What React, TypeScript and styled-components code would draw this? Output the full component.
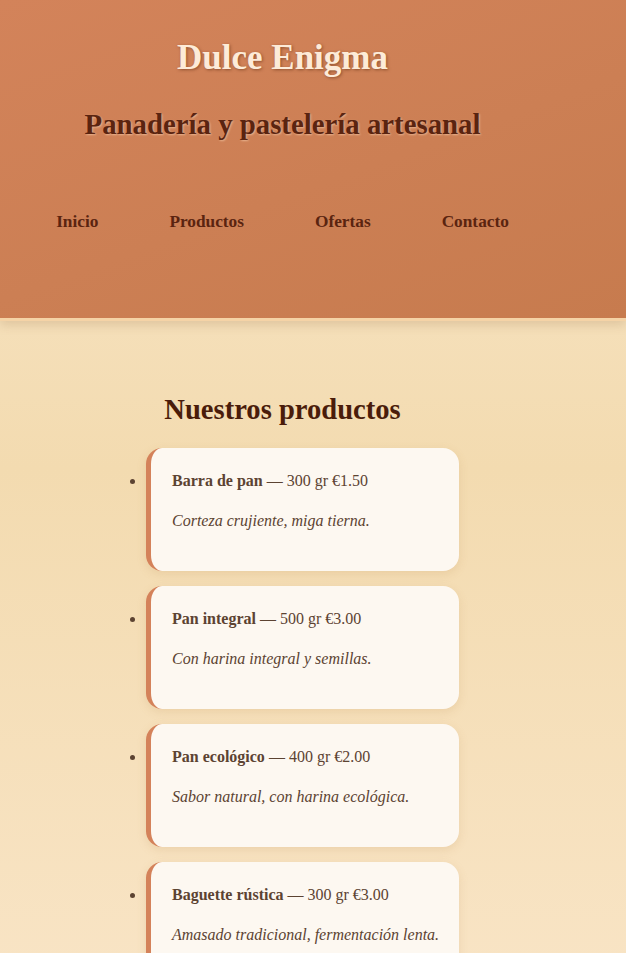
import React from 'react'
import styled, { createGlobalStyle } from 'styled-components'

const GlobalStyle = createGlobalStyle`
  html, body {
    margin: 0;
    padding: 0;
  }
  body {
    font-family: "Liberation Serif", "Times New Roman", serif;
    background: linear-gradient(180deg, #f9e8cc 0%, #f3dbb0 45%, #f9e5c7 100%);
    min-height: 100vh;
    color: #5c4332;
  }
`

const products = [
    { name: 'Barra de pan', weight: '300 gr', price: '€1.50', desc: 'Corteza crujiente, miga tierna.' },
    { name: 'Pan integral', weight: '500 gr', price: '€3.00', desc: 'Con harina integral y semillas.' },
    { name: 'Pan ecológico', weight: '400 gr', price: '€2.00', desc: 'Sabor natural, con harina ecológica.' },
    { name: 'Baguette rústica', weight: '300 gr', price: '€3.00', desc: 'Amasado tradicional, fermentación lenta.' }
]

function App(): JSX.Element {
    return (
        <>
            <GlobalStyle />
            <Header>
                <HeaderInner>
                    <Title>Dulce Enigma</Title>
                    <Subtitle>Panadería y pastelería artesanal</Subtitle>
                    <Nav>
                        <NavLink href="#">Inicio</NavLink>
                        <NavLink href="#">Productos</NavLink>
                        <NavLink href="#">Ofertas</NavLink>
                        <NavLink href="#">Contacto</NavLink>
                    </Nav>
                </HeaderInner>
            </Header>
            <Main>
                <Section>
                    <SectionTitle>Nuestros productos</SectionTitle>
                    <ProductList>
                        {products.map((p) => (
                            <ProductItem key={p.name}>
                                <strong>{p.name}</strong> — {p.weight} {p.price}
                                <Description>{p.desc}</Description>
                            </ProductItem>
                        ))}
                    </ProductList>
                </Section>
            </Main>
        </>
    )
}

export const Header = styled.header`
  height: 318px;
  background: linear-gradient(160deg, #d3835a 0%, #cc7f54 55%, #c77b4e 100%);
  border-bottom: 3px solid #f5d3a6;
  box-shadow: 0 4px 10px rgba(120, 80, 40, 0.18);
  position: relative;
`

export const HeaderInner = styled.div`
  width: 565px;
  padding-top: 37px;
  display: flex;
  flex-direction: column;
  align-items: center;
  text-align: center;
`

export const Title = styled.h1`
  margin: 0;
  font-size: 35px;
  line-height: 1.2;
  font-weight: 700;
  color: #fdebd8;
  text-shadow: 1px 1px 3px rgba(90, 40, 15, 0.55);
`

export const Subtitle = styled.h2`
  margin: 28px 0 0;
  font-size: 28.8px;
  line-height: 1.2;
  font-weight: 700;
  color: #5a2410;
  text-shadow: 1px 1px 2px rgba(255, 220, 190, 0.55);
`

export const Nav = styled.nav`
  margin-top: 70px;
  display: flex;
  justify-content: center;
  gap: 71px;
`

export const NavLink = styled.a`
  font-size: 17.3px;
  line-height: 1.2;
  font-weight: 700;
  color: #5a2410;
  text-decoration: none;
`

export const Main = styled.main`
  width: 565px;
  padding: 68px 0 40px;
`

export const Section = styled.section`
  width: 353px;
  margin: 0 auto;
`

export const SectionTitle = styled.h2`
  margin: 0 0 16px;
  font-size: 28.6px;
  line-height: 1.5;
  font-weight: 700;
  color: #4a1c0a;
  text-align: center;
`

export const ProductList = styled.ul`
  margin: 0;
  padding-left: 40px;
  list-style: disc;
  color: #5c4332;
`

export const ProductItem = styled.li`
  background: #fdf8f1;
  border-left: 5px solid #d4825a;
  border-radius: 16px;
  padding: 21px 14px 22px 21px;
  margin-bottom: 15px;
  font-size: 16px;
  line-height: 1.5;
  color: #5c4332;
  box-shadow: 0 3px 10px rgba(190, 140, 80, 0.18);

  strong {
    font-weight: 700;
  }
`

export const Description = styled.p`
  margin: 16px 0 16px;
  font-style: italic;
`

export default App
